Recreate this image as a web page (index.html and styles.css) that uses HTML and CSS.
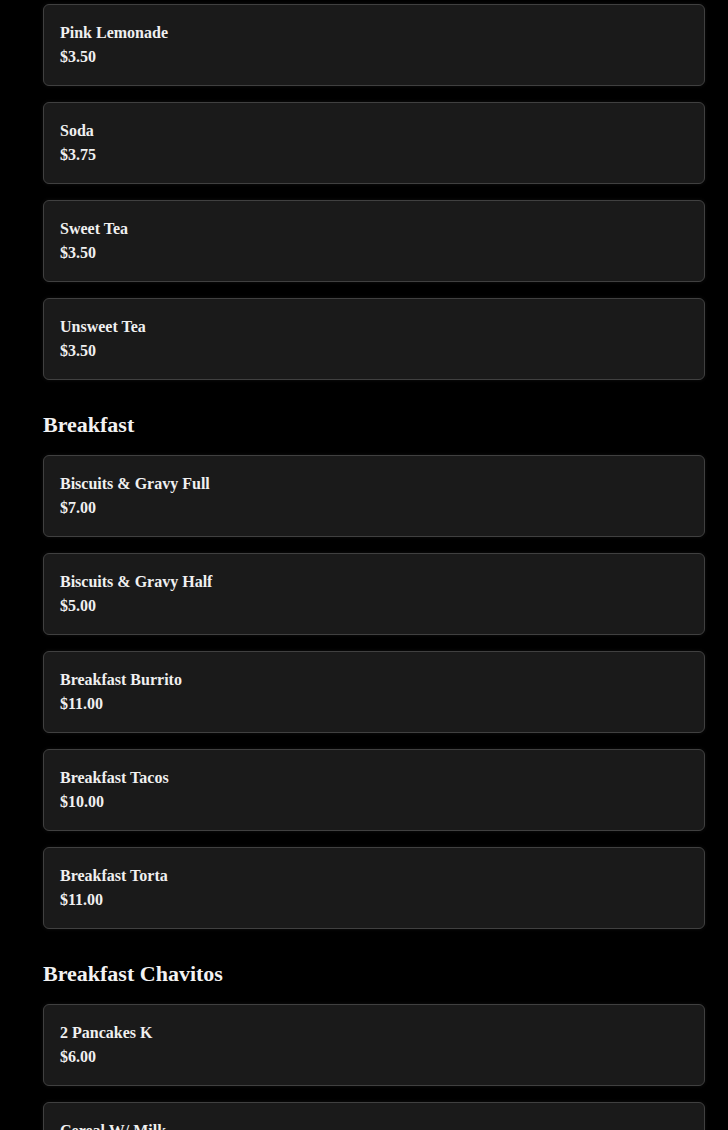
FILE: index.html
```html
<!DOCTYPE html>
<html>
<head>
<meta charset="utf-8">
<link rel="stylesheet" href="styles.css">
</head>
<body>
<div class="menu">
  <div class="card"><div class="name">Pink Lemonade</div><div class="price">$3.50</div></div>
  <div class="card"><div class="name">Soda</div><div class="price">$3.75</div></div>
  <div class="card"><div class="name">Sweet Tea</div><div class="price">$3.50</div></div>
  <div class="card"><div class="name">Unsweet Tea</div><div class="price">$3.50</div></div>

  <h2 class="section">Breakfast</h2>
  <div class="card"><div class="name">Biscuits &amp; Gravy Full</div><div class="price">$7.00</div></div>
  <div class="card"><div class="name">Biscuits &amp; Gravy Half</div><div class="price">$5.00</div></div>
  <div class="card"><div class="name">Breakfast Burrito</div><div class="price">$11.00</div></div>
  <div class="card"><div class="name">Breakfast Tacos</div><div class="price">$10.00</div></div>
  <div class="card"><div class="name">Breakfast Torta</div><div class="price">$11.00</div></div>

  <h2 class="section">Breakfast Chavitos</h2>
  <div class="card"><div class="name">2 Pancakes K</div><div class="price">$6.00</div></div>
  <div class="card"><div class="name">Cereal W/ Milk</div><div class="price">$4.00</div></div>
</div>
</body>
</html>
```

FILE: styles.css
```css
html, body {
  margin: 0;
  padding: 0;
  background: #000;
}
body {
  font-family: "Liberation Serif", "Times New Roman", serif;
  color: #f0f0f0;
}
.menu {
  padding: 4px 23px 0 43px;
}
.card {
  background: #1a1a1a;
  border: 1px solid #404040;
  border-radius: 6px;
  padding: 16px;
  margin-bottom: 16px;
  font-size: 16px;
  line-height: 24px;
  font-weight: bold;
  box-shadow: 0 0 4px rgba(255, 255, 255, 0.06);
}
.section {
  font-size: 22px;
  font-weight: bold;
  margin: 32px 0 17px 0;
  color: #f2f2f2;
}
```
